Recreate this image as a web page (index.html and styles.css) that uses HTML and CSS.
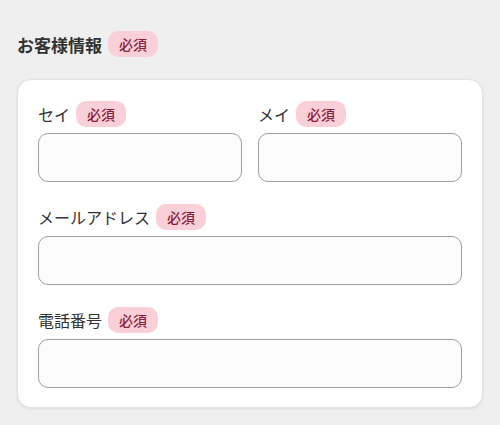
FILE: index.html
```html
<!DOCTYPE html>
<html lang="ja">
<head>
    <meta charset="UTF-8">
    <meta name="viewport" content="width=device-width, initial-scale=1.0">
    <title>お客様情報</title>
    <link rel="stylesheet" href="styles.css">
</head>
<body>
    <section class="customer">
        <h2 class="section-title">お客様情報 <span class="required">必須</span></h2>

        <form class="form-card">
            <div class="name-row">
                <div class="field">
                    <label class="field-label" for="sei">セイ <span class="required">必須</span></label>
                    <input class="text-input" type="text" id="sei">
                </div>
                <div class="field">
                    <label class="field-label" for="mei">メイ <span class="required">必須</span></label>
                    <input class="text-input" type="text" id="mei">
                </div>
            </div>
            <div class="field">
                <label class="field-label" for="email">メールアドレス <span class="required">必須</span></label>
                <input class="text-input" type="email" id="email">
            </div>
            <div class="field">
                <label class="field-label" for="tel">電話番号 <span class="required">必須</span></label>
                <input class="text-input" type="tel" id="tel">
            </div>
        </form>
    </section>
</body>
</html>
```

FILE: styles.css
```css
body {
    margin: 0;
    background-color: #efefef;
    font-family: "Noto Sans CJK JP", "Noto Sans", sans-serif;
    color: #333;
}

.customer {
    padding: 31px 17px 17px;
}

.section-title {
    margin: 0 0 22px;
    display: flex;
    align-items: center;
    gap: 6px;
    font-size: 17px;
    font-weight: bold;
    height: 26px;
}

/* pink "必須" tag next to each label */
.required {
    display: inline-block;
    height: 26px;
    line-height: 26px;
    padding: 0 11px;
    border-radius: 10px;
    background-color: #fad0d8;
    color: #8a1c3c;
    font-size: 14px;
    font-weight: 500;
}

.form-card {
    background-color: #fff;
    border: 1px solid #e2e2e2;
    border-radius: 14px;
    box-shadow: 0 1px 3px rgba(0, 0, 0, 0.08);
    padding: 21px 20px 19px;
    display: flex;
    flex-direction: column;
    gap: 22px;
}

.name-row {
    display: grid;
    grid-template-columns: 1fr 1fr;
    gap: 16px;
}

.field {
    display: flex;
    flex-direction: column;
    gap: 6px;
}

.field-label {
    display: flex;
    align-items: center;
    gap: 6px;
    height: 26px;
    font-size: 16px;
}

.text-input {
    box-sizing: border-box;
    width: 100%;
    height: 49px;
    margin: 0;
    border: 1px solid #9e9e9e;
    border-radius: 10px;
    background-color: #fcfcfc;
    font: inherit;
    padding: 0 12px;
}
```
